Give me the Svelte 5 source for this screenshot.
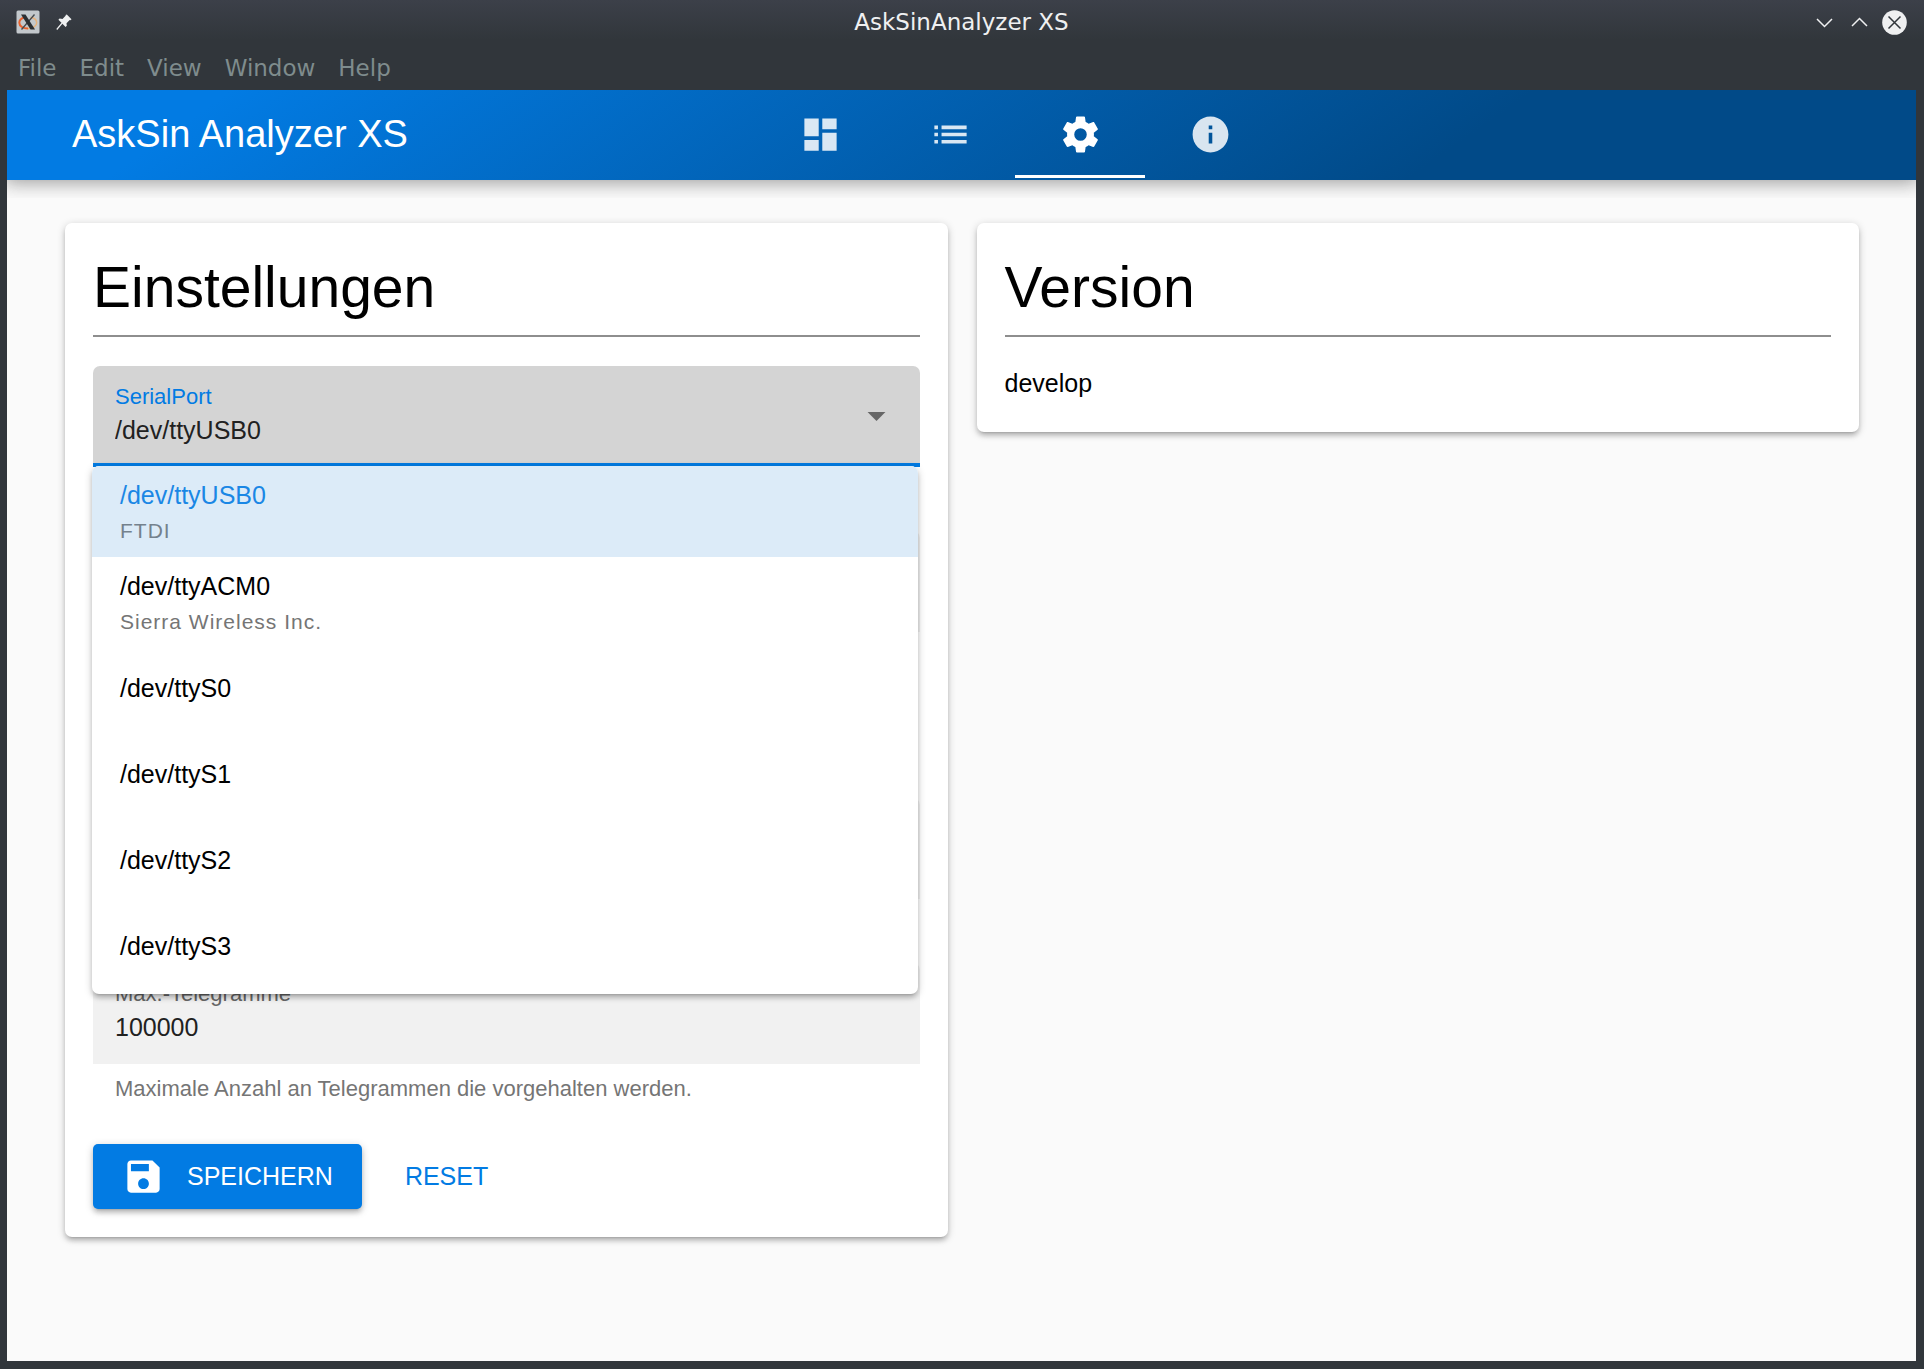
<script>
  const menus = ['File', 'Edit', 'View', 'Window', 'Help'];
  const tabs = [
    { name: 'Dashboard', d: 'M3 13h8V3H3v10zm0 8h8v-6H3v6zm10 0h8V11h-8v10zm0-18v6h8V3h-8z' },
    { name: 'Liste', d: 'M3 13h2v-2H3v2zm0 4h2v-2H3v2zm0-8h2V7H3v2zm4 4h14v-2H7v2zm0 4h14v-2H7v2zM7 7v2h14V7H7z' },
    { name: 'Einstellungen', d: 'M12 15.5A3.5 3.5 0 0 1 8.5 12 3.5 3.5 0 0 1 12 8.5a3.5 3.5 0 0 1 3.5 3.5 3.5 3.5 0 0 1-3.5 3.5m7.43-2.53c.04-.32.07-.64.07-.97 0-.33-.03-.66-.07-1l2.11-1.63c.19-.15.24-.42.12-.64l-2-3.46c-.12-.22-.39-.31-.61-.22l-2.49 1c-.52-.39-1.06-.73-1.69-.98l-.37-2.65A.506.506 0 0 0 14 2h-4c-.25 0-.46.18-.5.42l-.37 2.65c-.63.25-1.17.59-1.69.98l-2.49-1c-.22-.09-.49 0-.61.22l-2 3.46c-.13.22-.07.49.12.64L4.57 11c-.04.34-.07.67-.07 1 0 .33.03.65.07.97l-2.11 1.66c-.19.15-.25.42-.12.64l2 3.46c.12.22.39.3.61.22l2.49-1.01c.52.4 1.06.74 1.69.99l.37 2.65c.04.24.25.42.5.42h4c.25 0 .46-.18.5-.42l.37-2.65c.63-.26 1.17-.59 1.69-.99l2.49 1.01c.22.08.49 0 .61-.22l2-3.46c.12-.22.07-.49-.12-.64l-2.11-1.66Z' },
    { name: 'Info', d: 'M12 2C6.48 2 2 6.48 2 12s4.48 10 10 10 10-4.48 10-10S17.52 2 12 2zm1 15h-2v-6h2v6zm0-8h-2V7h2v2z' }
  ];
  const ports = [
    { path: '/dev/ttyUSB0', vendor: 'FTDI' },
    { path: '/dev/ttyACM0', vendor: 'Sierra Wireless Inc.' },
    { path: '/dev/ttyS0' },
    { path: '/dev/ttyS1' },
    { path: '/dev/ttyS2' },
    { path: '/dev/ttyS3' }
  ];

  let active = $state('Einstellungen');
  let port = $state('/dev/ttyUSB0');
  let open = $state(true);
  let maxTelegrams = $state('100000');

  function choose(path) {
    port = path;
    open = false;
  }

  function reset() {
    port = ports[0].path;
    maxTelegrams = '100000';
  }
</script>

<div class="window">
  <div class="titlebar">
    <div class="side">
      <svg class="app-icon" viewBox="0 0 24 24" aria-hidden="true">
        <rect x="0.5" y="0.5" width="23" height="23" rx="1.5" fill="#c3c8cc" />
        <path d="M9 7.2C5.500 8 3.300 10 3.300 12.800c0 3.400 3.900 5.800 8.700 5.800" fill="none" stroke="#e8622d" stroke-width="2" />
        <path d="M12 18.600c4.700 0 8.700-2.400 8.700-5.800 0-2.600-2.400-4.900-6.200-5.500" fill="none" stroke="#e6b27c" stroke-width="1.5" />
        <path d="M18.500 4.500 5.500 19.500" stroke="#44494d" stroke-width="1.3" />
        <path d="M5 4.500h4.500L19 19.500h-4.500z" fill="#2b2f33" />
      </svg>
      <svg class="pin" viewBox="0 0 16 16" aria-hidden="true">
        <path d="M10.8 0.5 15.5 5.2l-1 1-0.8-0.2-3.2 3.2 0.3 2.5-1.2 1.2-3.2-3.2L1.2 15.9 0.3 15l5.2-6.2-3.1-3.1 1.2-1.2 2.9 0.4 3.3-3.3-0.2-0.5z" fill="#eff0f1" />
      </svg>
    </div>
    <div class="caption">AskSinAnalyzer XS</div>
    <div class="side controls">
      <button aria-label="Minimieren">
        <svg viewBox="0 0 25 25"><path d="M5 9l7.5 7.5L20 9" fill="none" stroke="#eff0f1" stroke-width="1.5" /></svg>
      </button>
      <button aria-label="Maximieren">
        <svg viewBox="0 0 25 25"><path d="M5 16l7.5-7.5L20 16" fill="none" stroke="#eff0f1" stroke-width="1.5" /></svg>
      </button>
      <button aria-label="Schließen">
        <svg viewBox="0 0 25 25"><circle cx="12.5" cy="12.5" r="12.3" fill="#eff0f1" /><path d="M6.5 6.5l12 12m0-12l-12 12" stroke="#31363b" stroke-width="1.5" /></svg>
      </button>
    </div>
  </div>

  <div class="menubar">
    {#each menus as m}
      <button>{m}</button>
    {/each}
  </div>

  <div class="app">
    <header>
      <div class="brand">AskSin Analyzer XS</div>
      <nav>
        {#each tabs as t}
          <button class="tab" class:active={active === t.name} aria-label={t.name} onclick={() => (active = t.name)}>
            <svg class="icon" viewBox="0 0 24 24"><path d={t.d} fill="currentColor" /></svg>
          </button>
        {/each}
      </nav>
    </header>

    <main>
      <section class="card">
        <h1>Einstellungen</h1>
        <form onsubmit={(e) => e.preventDefault()}>
          <div class="field select" class:open>
            <label for="port">SerialPort</label>
            <select id="port" bind:value={port} onmousedown={(e) => { e.preventDefault(); open = !open; }}>
              {#each ports as p}
                <option value={p.path}>{p.path}</option>
              {/each}
            </select>
            <svg class="icon caret" viewBox="0 0 24 24" aria-hidden="true"><path d="M7 10l5 5 5-5z" fill="currentColor" /></svg>
            {#if open}
              <div class="menu" role="listbox" aria-label="SerialPort">
                {#each ports as p}
                  <button type="button" class="item" class:detailed={p.vendor} class:chosen={p.path === port} role="option" aria-selected={p.path === port} onclick={() => choose(p.path)}>
                    <span class="path">{p.path}</span>
                    {#if p.vendor}<span class="vendor">{p.vendor}</span>{/if}
                  </button>
                {/each}
              </div>
            {/if}
          </div>
          <div class="field"></div>
          <div class="spacer"></div>
          <div class="field"></div>
          <div>
            <div class="field">
              <label for="max">Max.-Telegramme</label>
              <input id="max" type="text" inputmode="numeric" aria-describedby="max-hint" bind:value={maxTelegrams} />
            </div>
            <p class="hint" id="max-hint">Maximale Anzahl an Telegrammen die vorgehalten werden.</p>
          </div>
          <div class="actions">
            <button type="submit" class="btn primary">
              <svg class="icon" viewBox="0 0 24 24" aria-hidden="true"><path d="M17 3H5c-1.11 0-2 .9-2 2v14c0 1.1.89 2 2 2h14c1.1 0 2-.9 2-2V7l-4-4zm-5 16c-1.66 0-3-1.34-3-3s1.34-3 3-3 3 1.34 3 3-1.34 3-3 3zm3-10H5V5h10v4z" fill="currentColor" /></svg>
              SPEICHERN
            </button>
            <button type="button" class="btn" onclick={reset}>RESET</button>
          </div>
        </form>
      </section>

      <section class="card">
        <h1>Version</h1>
        <p class="version">develop</p>
      </section>
    </main>
  </div>
</div>

<style>
  :global(body) {
    margin: 0;
    background: #31363b;
  }
  .window {
    box-sizing: border-box;
    min-height: 100vh;
    display: flex;
    flex-direction: column;
    padding: 0 8px 8px 7px;
    background: linear-gradient(#3c4049, #31363b 40px);
    font-family: 'Liberation Sans', Arial, sans-serif;
    font-size: 25px;
  }
  button {
    border: 0;
    padding: 0;
    background: none;
    color: inherit;
    font: inherit;
    cursor: pointer;
  }
  svg {
    display: block;
  }

  .titlebar {
    display: flex;
    align-items: center;
    height: 44px;
    padding: 0 9px 0 9px;
    color: #eff0f1;
    font: 23px/44px 'DejaVu Sans', sans-serif;
  }
  .side {
    flex: 1;
    display: flex;
    align-items: center;
    gap: 16px;
  }
  .controls {
    justify-content: flex-end;
    gap: 10px;
  }
  .app-icon {
    width: 24px;
    height: 24px;
  }
  .pin {
    width: 16px;
    height: 16px;
  }
  .controls svg {
    width: 25px;
    height: 25px;
  }
  .menubar {
    display: flex;
    gap: 23px;
    height: 46px;
    padding: 0 11px;
    color: #7f8c8d;
    font: 23px/48px 'DejaVu Sans', sans-serif;
  }

  .app {
    flex: 1;
    background: #fafafa;
  }
  header {
    position: relative;
    display: grid;
    grid-template-columns: 392fr 608fr;
    height: 90px;
    background: linear-gradient(145deg, #027be3 11%, #014a88 75%);
    color: #fff;
  }
  header::after {
    content: '';
    position: absolute;
    inset: 0;
    clip-path: inset(0 0 -18px);
    box-shadow: 0 0 18px 4px rgba(0, 0, 0, 0.2), 0 0 18px rgba(0, 0, 0, 0.24);
    pointer-events: none;
  }
  .brand {
    padding-left: 65px;
    font-size: 38px;
    line-height: 88px;
    white-space: nowrap;
  }
  nav {
    display: flex;
  }
  .tab {
    display: grid;
    place-items: center;
    width: 130px;
    border-top: 3px solid transparent;
    border-bottom: 3px solid transparent;
    margin-bottom: 2px;
    color: rgba(255, 255, 255, 0.85);
  }
  .tab.active {
    color: #fff;
    border-bottom-color: #fff;
  }
  .icon {
    width: 43px;
    height: 43px;
    flex: none;
  }

  main {
    display: grid;
    grid-template-columns: 1fr 1fr;
    align-items: start;
    gap: 29px;
    padding: 43px 57px 43px 58px;
  }
  .card {
    padding: 28px;
    border-radius: 7px;
    background: #fff;
    box-shadow: 0 2px 9px rgba(0, 0, 0, 0.2), 0 4px 4px rgba(0, 0, 0, 0.14), 0 5px 2px -4px rgba(0, 0, 0, 0.12);
  }
  h1 {
    margin: 0 0 29px;
    padding-bottom: 12px;
    border-bottom: 2px solid #8e8e8e;
    font-size: 57px;
    font-weight: 400;
    line-height: 72px;
  }
  form {
    display: flex;
    flex-direction: column;
    gap: 64px;
  }
  .field {
    position: relative;
    box-sizing: border-box;
    height: 101px;
    padding: 18px 22px 0;
    border-radius: 7px 7px 0 0;
    background: #f1f1f1;
  }
  .spacer {
    height: 38px;
  }
  .field label {
    display: block;
    height: 28px;
    color: #666;
    font-size: 22px;
    line-height: 26px;
  }
  .field input,
  .field select {
    display: block;
    box-sizing: border-box;
    width: 100%;
    height: 36px;
    margin: 0;
    padding: 0;
    border: 0;
    outline: 0;
    appearance: none;
    background: none;
    color: #212121;
    font: inherit;
  }
  .select.open {
    border-bottom: 4px solid #027be3;
    border-radius: 7px 7px 0 0;
    background: #d4d4d4;
  }
  .select.open label {
    color: #027be3;
  }
  .caret {
    position: absolute;
    top: 28px;
    right: 22px;
    color: #666;
    pointer-events: none;
  }
  .menu {
    position: absolute;
    z-index: 2;
    top: 100px;
    left: -1px;
    right: 2px;
    overflow: hidden;
    padding-bottom: 2px;
    border-radius: 7px;
    background: #fff;
    box-shadow: 0 2px 9px rgba(0, 0, 0, 0.2), 0 4px 4px rgba(0, 0, 0, 0.14), 0 5px 2px -4px rgba(0, 0, 0, 0.12);
  }
  .item {
    display: flex;
    flex-direction: column;
    justify-content: center;
    gap: 7px;
    box-sizing: border-box;
    width: 100%;
    height: 86px;
    padding: 0 28px 6px;
    color: #000;
    text-align: left;
  }
  .item.detailed {
    height: 91px;
    padding: 2px 28px 0;
  }
  .item.chosen {
    background: #dcebf8;
    color: #1a87e5;
  }
  .path {
    line-height: 30px;
  }
  .vendor {
    color: #757575;
    font-size: 21px;
    line-height: 28px;
    letter-spacing: 1px;
  }
  .chosen .vendor {
    color: #74818d;
  }
  .hint {
    margin: 0;
    padding: 12px 22px 0;
    color: #757575;
    font-size: 22px;
    line-height: 26px;
  }
  .actions {
    display: flex;
    gap: 14px;
    margin-top: -22px;
  }
  .btn {
    display: flex;
    align-items: center;
    gap: 22px;
    height: 65px;
    padding: 0 29px;
    border-radius: 5px;
    color: #027be3;
  }
  .primary {
    background: #027be3;
    color: #fff;
    box-shadow: 0 2px 9px rgba(0, 0, 0, 0.2), 0 4px 4px rgba(0, 0, 0, 0.14), 0 5px 2px -4px rgba(0, 0, 0, 0.12);
  }
  .version {
    margin: 0;
    padding-bottom: 4px;
    line-height: 34px;
  }
</style>
